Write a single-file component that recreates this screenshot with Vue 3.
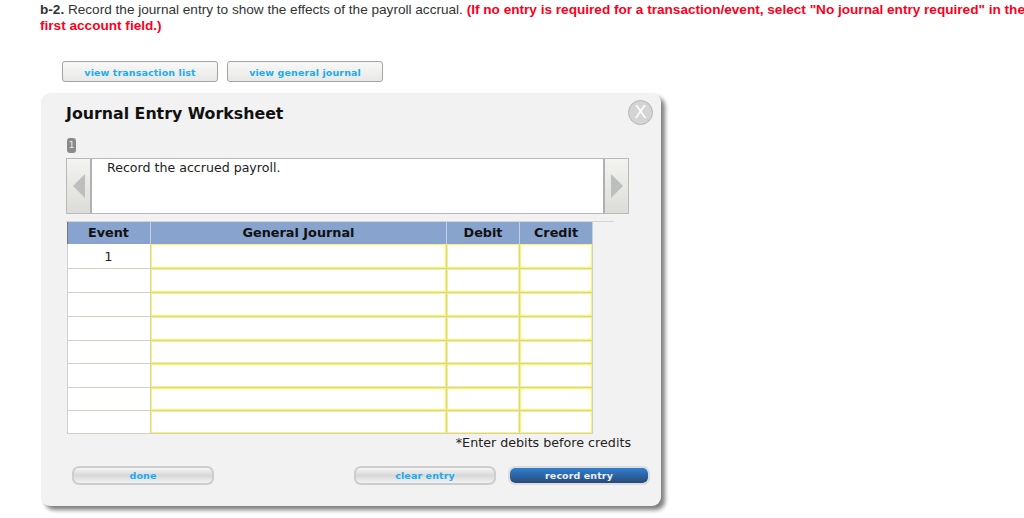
<script setup>
const rows = ['1', '', '', '', '', '', '', '']
const heights = [25, 24, 24, 24, 23, 24, 23, 23]
</script>

<template>
  <div class="page">
    <p class="question">
      <b>b-2.</b> Record the journal entry to show the effects of the payroll accrual.
      <b class="red">(If no entry is required for a transaction/event, select "No journal entry required" in the<br>first account field.)</b>
    </p>
    <div class="links">
      <button class="link">view transaction list</button>
      <button class="link">view general journal</button>
    </div>
    <section class="panel">
      <header class="head">
        <h1>Journal Entry Worksheet</h1>
        <span class="close">X</span>
      </header>
      <div class="step">1</div>
      <div class="desc">
        <div class="arrow left"><svg width="12" height="24" viewBox="0 0 12 24"><path d="M12 0V24L0 12Z" fill="#bdbfbe"/></svg></div>
        <div class="desc-text">Record the accrued payroll.</div>
        <div class="arrow right"><svg width="12" height="24" viewBox="0 0 12 24"><path d="M0 0V24L12 12Z" fill="#bdbfbe"/></svg></div>
      </div>
      <div class="rule"></div>
      <div class="table">
        <div class="row header">
          <div class="c ev">Event</div>
          <div class="c gj">General Journal</div>
          <div class="c db">Debit</div>
          <div class="c cr">Credit</div>
        </div>
        <div v-for="(r, i) in rows" :key="i" class="row body" :style="{ height: heights[i] + 'px' }">
          <div class="c ev">{{ r }}</div>
          <div class="c gj cell"><div class="input"></div></div>
          <div class="c db cell"><div class="input"></div></div>
          <div class="c cr cell"><div class="input"></div></div>
        </div>
      </div>
      <p class="note">*Enter debits before credits</p>
      <div class="actions">
        <button class="pill">done</button>
        <div class="right-actions">
          <button class="pill">clear entry</button>
          <button class="pill primary">record entry</button>
        </div>
      </div>
    </section>
  </div>
</template>

<style>
html, body { margin: 0; background: #fff; }
</style>

<style scoped>
.page {
  width: 1024px;
  height: 518px;
  overflow: hidden;
  box-sizing: border-box;
  padding: 2px 0 0 40px;
  font-family: "DejaVu Sans", sans-serif;
}
.question {
  margin: 0;
  font: 13.6px/16px "Liberation Sans", Arial, sans-serif;
  color: #333;
  white-space: nowrap;
}
.question .red { color: #fb0020; }
.links {
  display: flex;
  gap: 9px;
  margin: 27px 0 0 22px;
}
.link {
  width: 156px;
  height: 21px;
  padding: 1px 0 0;
  box-sizing: border-box;
  border: 1px solid #a3a3a3;
  border-radius: 3px;
  background: linear-gradient(#f8f8f6, #e8e8e6);
  color: #1eaaf1;
  font: bold 9.5px "DejaVu Sans", sans-serif;
  letter-spacing: .1px;
}
.panel {
  width: 620px;
  height: 413px;
  margin: 11px 0 0 1px;
  box-sizing: border-box;
  padding: 0 0 0 25px;
  background: #f2f2f2;
  border-radius: 9px;
  box-shadow: 4px 4px 4px #808080;
}
.head {
  display: flex;
  justify-content: space-between;
  align-items: flex-start;
  box-sizing: border-box;
  padding: 6px 8px 0 0;
  height: 38px;
}
h1 {
  margin: 5px 0 0;
  font: bold 15.8px/20px "DejaVu Sans", sans-serif;
  color: #111;
}
.close {
  width: 23px;
  height: 23px;
  margin-top: 1px;
  border: 1px solid #b5b5b5;
  border-radius: 50%;
  background: #d4d4d4;
  color: #fff;
  font: 18px/23px "Liberation Sans", sans-serif;
  text-align: center;
}
.step {
  width: 9px;
  height: 15px;
  margin: 7px 0 0 1px;
  background: #8a8a8a;
  border-radius: 3px;
  color: #eee;
  font: 9px/15px "DejaVu Sans", sans-serif;
  text-align: center;
}
.desc {
  display: flex;
  width: 563px;
  height: 56px;
  margin: 5px 0 0 0;
  box-sizing: border-box;
  background: #fff;
  border: 1px solid #b9b9b9;
}
.arrow {
  width: 25px;
  box-sizing: border-box;
  flex: none;
  display: flex;
  align-items: center;
  justify-content: center;
  background: linear-gradient(#f3f3f1, #dcdcd8);
}
.arrow.left { border-right: 2px solid #b0b0b0; }
.arrow.right { border-left: 2px solid #b0b0b0; }
.desc-text {
  flex: 1;
  padding: 1px 0 0 15px;
  font-size: 12.6px;
  line-height: 16px;
  color: #222;
}
.rule {
  width: 548px;
  height: 1px;
  margin-top: 7px;
  background: #d6d6d6;
}
.table {
  width: 526px;
  margin-left: 1px;
}
.row { display: flex; box-sizing: border-box; }
.c { box-sizing: border-box; flex: none; border-right: 1px solid #d0d0c4; }
.ev { width: 84px; }
.gj { width: 296px; }
.db { width: 73px; }
.cr { width: 73px; }
.header {
  height: 22px;
  background: #88a3ce;
  box-shadow: inset 1px 0 0 #777;
}
.header .c {
  font: bold 12.8px/21px "DejaVu Sans", sans-serif;
  color: #111;
  text-align: center;
  border-right-color: #c3cede;
}
.body { border-bottom: 1px solid #d0d0c4; }
.body .ev {
  background: #fff;
  box-shadow: inset 1px 0 0 #cfcfcf;
  font: 13px/25px "DejaVu Sans", sans-serif;
  color: #222;
  text-align: center;
}
.cell { display: flex; }
.input {
  flex: 1;
  box-sizing: border-box;
  background: #fff;
  border: 1px solid #fcf85c;
}
.note {
  margin: 0;
  width: 565px;
  height: 17px;
  padding-top: 1px;
  box-sizing: border-box;
  text-align: right;
  font-size: 12.7px;
  line-height: 16px;
  color: #222;
}
.actions {
  display: flex;
  justify-content: space-between;
  width: 578px;
  margin: 15px 0 0 6px;
}
.right-actions { display: flex; gap: 12px; }
.pill {
  width: 142px;
  height: 19px;
  padding: 0;
  box-sizing: border-box;
  border: 2px solid #cdcdcd;
  border-radius: 7px;
  background: linear-gradient(#f6f6f6, #d8d8d8 50%, #f2f2f2);
  color: #1eaaf1;
  font: bold 9.5px/15px "DejaVu Sans", sans-serif;
  letter-spacing: .1px;
}
.primary {
  background: linear-gradient(#2f80d0, #2c5a92 70%, #28497a);
  background-clip: padding-box;
  color: #eaf0f8;
  border-color: #dcdcdc;
}
</style>
